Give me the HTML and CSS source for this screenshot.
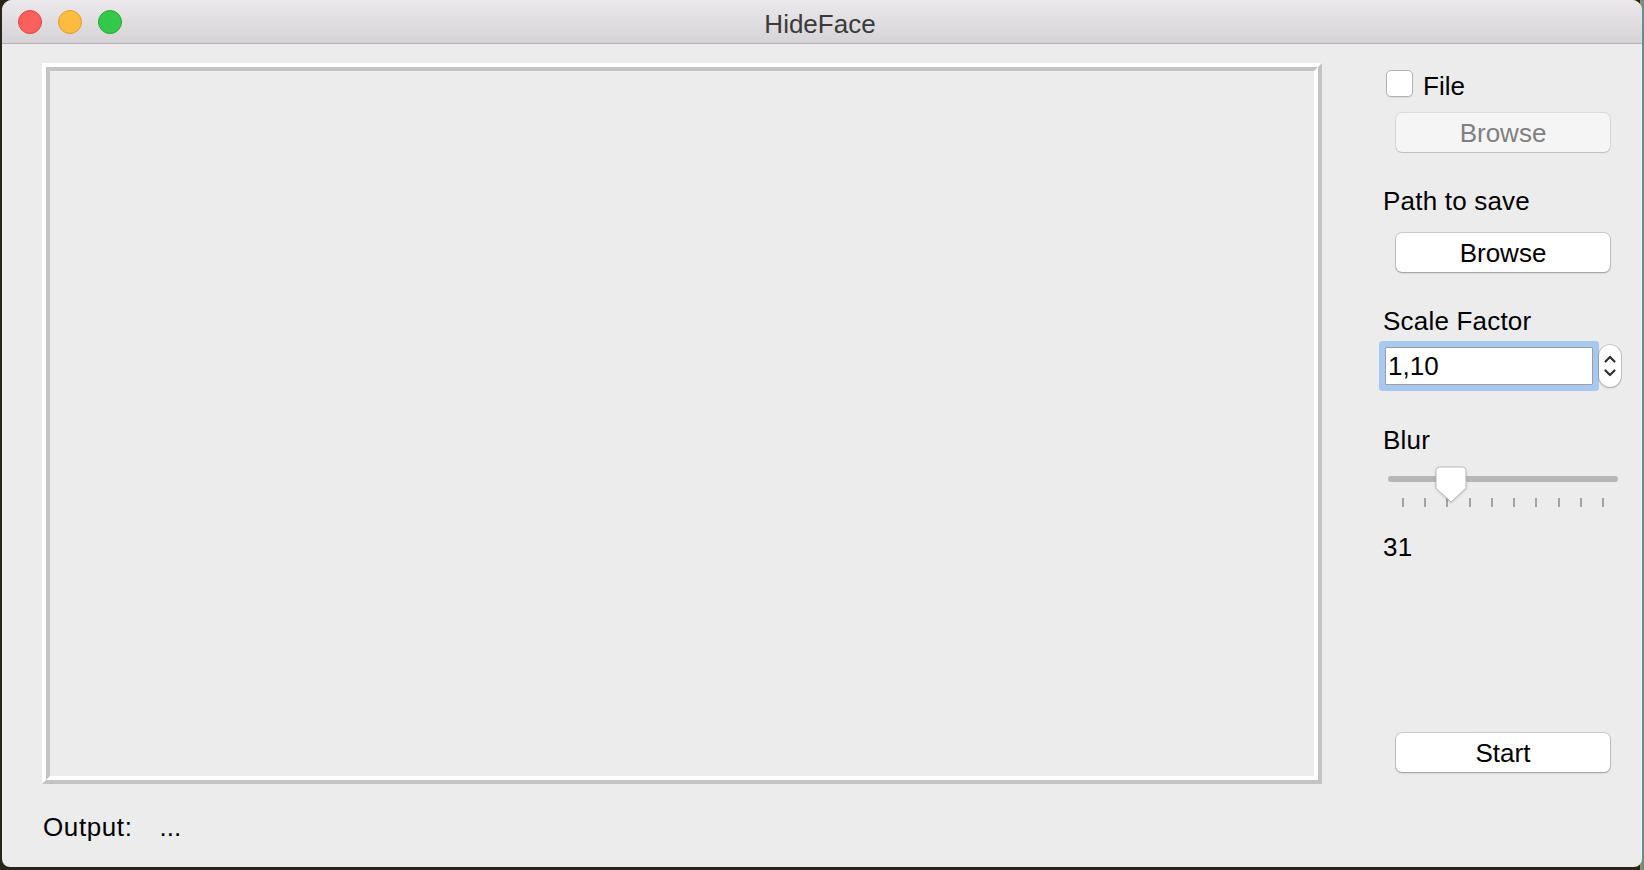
FILE: index.html
```html
<!DOCTYPE html>
<html>
<head>
<meta charset="utf-8">
<title>HideFace</title>
<link rel="stylesheet" href="styles.css">
</head>
<body>
<div class="window">
  <div class="titlebar">
    <div class="lights">
      <span class="light red"></span>
      <span class="light yellow"></span>
      <span class="light green"></span>
    </div>
    <div class="title">HideFace</div>
  </div>
  <div class="content">
    <div class="left">
      <div class="frame"><div class="frame-inner"></div></div>
      <div class="output"><span class="out-label">Output:</span><span class="dots">...</span></div>
    </div>
    <div class="side">
      <div class="check-row">
        <span class="checkbox"></span>
        <span class="check-label">File</span>
      </div>
      <div class="btn disabled first-btn">Browse</div>
      <div class="label path-label">Path to save</div>
      <div class="btn browse-btn">Browse</div>
      <div class="label scale-label">Scale Factor</div>
      <div class="spin-row">
        <div class="spin-input">1,10</div>
        <div class="stepper">
          <svg width="22" height="42" viewBox="0 0 22 42">
            <path d="M6.5 16.5 L11 12 L15.5 16.5" fill="none" stroke="#2e2e2e" stroke-width="2.2" stroke-linecap="round" stroke-linejoin="round"/>
            <path d="M6.5 25.5 L11 30 L15.5 25.5" fill="none" stroke="#2e2e2e" stroke-width="2.2" stroke-linecap="round" stroke-linejoin="round"/>
          </svg>
        </div>
      </div>
      <div class="label blur-label">Blur</div>
      <div class="slider">
        <div class="track"></div>
        <div class="ticks">
          <span></span><span></span><span></span><span></span><span></span>
          <span></span><span></span><span></span><span></span><span></span>
        </div>
        <svg class="handle" width="32" height="37" viewBox="0 0 32 37">
          <path d="M4.5 1 H27.5 Q31 1 31 4.5 V22 L16 36 L1 22 V4.5 Q1 1 4.5 1 Z" fill="#fff" stroke="#b9b9b9" stroke-width="1"/>
        </svg>
      </div>
      <div class="label value-label">31</div>
      <div class="btn start-btn">Start</div>
    </div>
  </div>
</div>
</body>
</html>
```
FILE: styles.css
```css
html, body {
  margin: 0;
  padding: 0;
}
body {
  width: 1644px;
  height: 870px;
  overflow: hidden;
  background: linear-gradient(90deg, #2b2418 0, #2b2418 1640px, #b08c3c 1640px, #4a8fa8 1644px);
  font-family: "Liberation Sans", Arial, sans-serif;
  font-size: 26px;
  color: #000;
}
.window {
  margin-left: 2px;
  width: 1640px;
  height: 867px;
  background: #ececec;
  border-radius: 10px 10px 8px 8px;
  overflow: hidden;
  display: flex;
  flex-direction: column;
}
.titlebar {
  height: 43px;
  border-bottom: 1px solid #b3b1b3;
  background: linear-gradient(#ebe9eb, #d5d3d5);
  display: flex;
  align-items: center;
  position: relative;
}
.lights {
  display: flex;
  gap: 16px;
  padding-left: 16px;
  position: absolute;
  left: 0;
  top: 10px;
}
.light {
  width: 22px;
  height: 22px;
  border-radius: 50%;
  display: block;
}
.red { background: #fc605c; border: 1px solid #df4744; }
.yellow { background: #fdbc40; border: 1px solid #de9e30; }
.green { background: #34c84a; border: 1px solid #25a834; }
.title {
  flex: 1;
  text-align: center;
  color: #3a3a3a;
  line-height: 30px;
  padding-top: 5px;
  padding-right: 4px;
}
.content {
  flex: 1;
  display: flex;
}
.left {
  padding: 19px 0 0 40px;
  display: flex;
  flex-direction: column;
}
.frame {
  width: 1280px;
  height: 721px;
  box-sizing: border-box;
  border: 4px solid;
  border-color: #ffffff #c3c3c3 #c3c3c3 #ffffff;
}
.frame-inner {
  width: 100%;
  height: 100%;
  box-sizing: border-box;
  border: 4px solid;
  border-color: #c3c3c3 #ffffff #ffffff #c3c3c3;
  background: #ececec;
}
.output {
  margin-top: 28px;
  padding-left: 1px;
  line-height: 30px;
  display: flex;
}
.out-label {
  letter-spacing: 0.6px;
}
.dots {
  margin-left: 27px;
}
.side {
  margin-left: 61px;
  width: 245px;
  padding-top: 26px;
  display: flex;
  flex-direction: column;
}
.label {
  line-height: 30px;
  height: 30px;
  letter-spacing: 0.2px;
}
.check-row {
  display: flex;
  align-items: center;
  height: 27px;
  padding-left: 3px;
}
.checkbox {
  width: 25px;
  height: 25px;
  border: 1px solid #b3b3b3;
  border-radius: 5px;
  background: #fff;
  box-shadow: 0 1px 1px rgba(0,0,0,0.08);
}
.check-label {
  margin-left: 10px;
  line-height: 30px;
  padding-top: 4px;
}
.btn {
  margin-left: 13px;
  width: 214px;
  height: 39px;
  box-sizing: border-box;
  border-radius: 6px;
  background: #fff;
  box-shadow: 0 0 0 1px rgba(0,0,0,0.13), 0 1px 2px rgba(0,0,0,0.25);
  display: flex;
  align-items: center;
  justify-content: center;
  line-height: 30px;
}
.btn.disabled {
  background: #f5f5f5;
  color: #808080;
  box-shadow: 0 0 0 1px rgba(0,0,0,0.08), 0 1px 1px rgba(0,0,0,0.12);
}
.first-btn { margin-top: 16px; }
.path-label { margin-top: 34px; }
.browse-btn { margin-top: 17px; }
.scale-label { margin-top: 34px; }
.spin-row {
  margin-top: 11px;
  margin-left: 2px;
  display: flex;
  align-items: center;
  height: 38px;
}
.spin-input {
  width: 208px;
  height: 38px;
  box-sizing: border-box;
  border: 1px solid #9e9e9e;
  background: #fff;
  box-shadow: 0 0 0 6px #a7c9ef;
  border-radius: 1px;
  padding-left: 2px;
  line-height: 36px;
}
.stepper {
  margin-left: 6px;
  width: 22px;
  height: 42px;
  border-radius: 11px;
  background: #fff;
  box-shadow: 0 0 0 1px rgba(0,0,0,0.14), 0 1px 2px rgba(0,0,0,0.2);
}
.stepper svg { display: block; }
.blur-label { margin-top: 40px; }
.slider {
  position: relative;
  margin-top: 10px;
  height: 42px;
}
.track {
  margin-left: 5px;
  margin-top: 11px;
  width: 230px;
  height: 6px;
  border-radius: 3px;
  background: #b6b6b6;
}
.ticks {
  margin-top: 16px;
  margin-left: 19px;
  width: 202px;
  height: 9px;
  display: flex;
  justify-content: space-between;
}
.ticks span {
  width: 2px;
  height: 9px;
  background: #a3a3a3;
}
.handle {
  position: absolute;
  left: 52px;
  top: 1px;
  filter: drop-shadow(0 1px 1px rgba(0,0,0,0.15));
}
.value-label { margin-top: 25px; }
.start-btn { margin-top: 171px; }
```
